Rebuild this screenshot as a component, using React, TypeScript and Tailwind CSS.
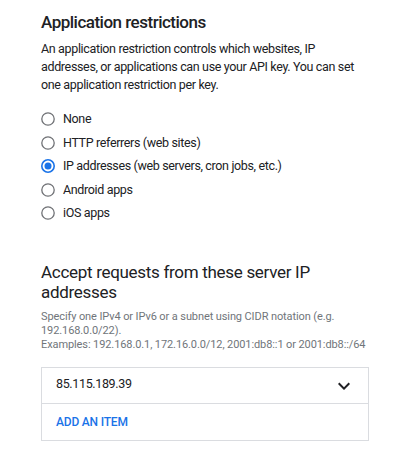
import React from 'react';

const options = [
  'None',
  'HTTP referrers (web sites)',
  'IP addresses (web servers, cron jobs, etc.)',
  'Android apps',
  'iOS apps',
];

const Radio: React.FC<{ checked: boolean }> = ({ checked }) => (
  <svg width="14" height="14" viewBox="0 0 14 14" className="shrink-0">
    <circle
      cx="7"
      cy="7"
      r="6.2"
      fill="none"
      stroke={checked ? '#1a73e8' : '#6f7175'}
      strokeWidth={checked ? 1.6 : 1.3}
    />
    {checked && <circle cx="7" cy="7" r="3.5" fill="#1a73e8" />}
  </svg>
);

export default function App() {
  const selected = 2;

  return (
    <div className="w-[417px] min-h-[467px] bg-white px-[41px] pt-[10px] font-['Roboto',sans-serif] text-[#202124]">
      <div className="w-[328px]">
        <h2 className="text-[17px] leading-6 font-medium tracking-[-0.5px]">Application restrictions</h2>
        <p className="mt-[6px] text-[12.5px] leading-[18px] tracking-[-0.35px] text-[#202124]">
          An application restriction controls which websites, IP addresses, or applications can use your API key. You
          can set one application restriction per key.
        </p>

        <div className="mt-[13.5px] flex flex-col">
          {options.map((label, i) => (
            <label
              key={label}
              className="flex h-[23.5px] items-center gap-2 text-[12.5px] leading-[18px] tracking-[-0.35px]"
            >
              <Radio checked={i === selected} />
              <span>{label}</span>
            </label>
          ))}
        </div>

        <h3 className="mt-[37px] text-[17px] leading-[20px] font-normal tracking-[-0.3px]">
          Accept requests from these server IP addresses
        </h3>
        <p className="mt-[8px] text-[11px] leading-[14px] tracking-[-0.1px] text-[#70757a]">
          Specify one IPv4 or IPv6 or a subnet using CIDR notation (e.g. 192.168.0.0/22).
          <br />
          <span className="whitespace-nowrap">
            Examples: 192.168.0.1, 172.16.0.0/12, 2001:db8::1 or 2001:db8::/64
          </span>
        </p>

        <div className="mt-[15px] border border-[#dadce0]">
          <div className="flex h-9 items-center justify-between border-b border-[#dadce0] pl-[14px] pr-[12px]">
            <span className="pb-[3px] text-[12.5px] leading-[18px] tracking-[-0.35px] text-[#202124]">
              85.115.189.39
            </span>
            <svg width="24" height="24" viewBox="0 0 24 24">
              <path d="M16.59 8.59L12 13.17 7.41 8.59 6 10l6 6 6-6z" fill="#202124" />
            </svg>
          </div>
          <div className="flex h-9 items-center pl-[14px]">
            <button className="text-[12px] leading-4 font-medium uppercase tracking-[-0.2px] text-[#1a73e8]">
              Add an item
            </button>
          </div>
        </div>
      </div>
    </div>
  );
}
